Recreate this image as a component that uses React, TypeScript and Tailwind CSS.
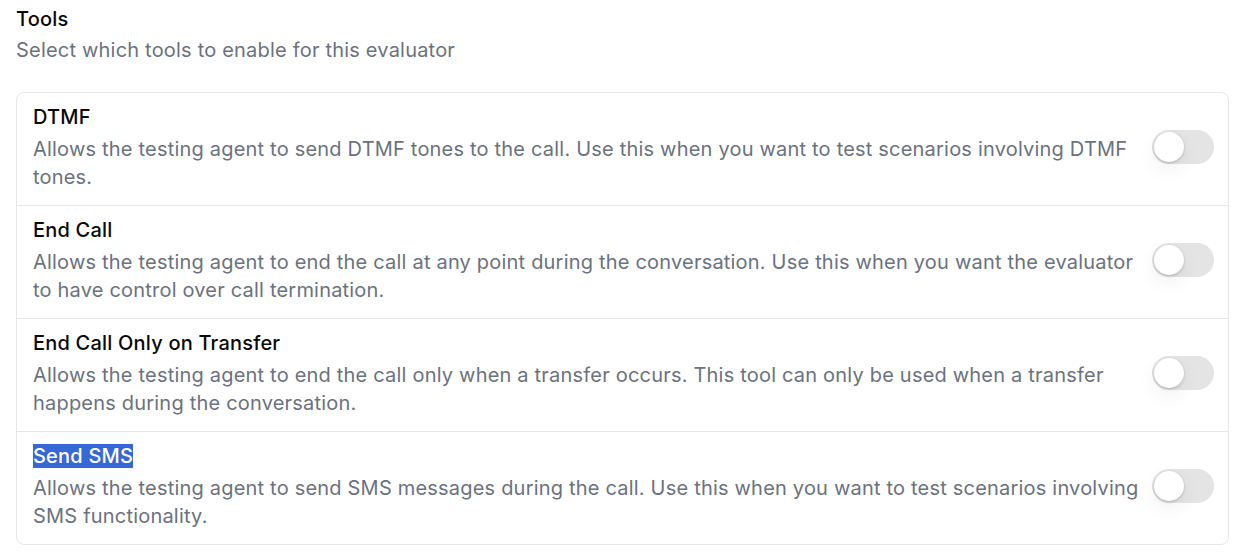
const tools = [
  {
    name: 'DTMF',
    description:
      'Allows the testing agent to send DTMF tones to the call. Use this when you want to test scenarios involving DTMF tones.',
  },
  {
    name: 'End Call',
    description:
      'Allows the testing agent to end the call at any point during the conversation. Use this when you want the evaluator to have control over call termination.',
  },
  {
    name: 'End Call Only on Transfer',
    description:
      'Allows the testing agent to end the call only when a transfer occurs. This tool can only be used when a transfer happens during the conversation.',
  },
  {
    name: 'Send SMS',
    description:
      'Allows the testing agent to send SMS messages during the call. Use this when you want to test scenarios involving SMS functionality.',
    selected: true,
  },
]

function Toggle() {
  return (
    <div className="flex h-[34px] w-[62px] shrink-0 items-center rounded-full bg-[#e4e4e4] px-[2px]">
      <div className="h-[30px] w-[30px] rounded-full bg-white shadow-[0_1px_3px_rgba(0,0,0,0.2),0_8px_20px_rgba(0,0,0,0.06)]" />
    </div>
  )
}

export default function App() {
  return (
    <div className="min-h-screen bg-white px-4 pt-[5px] font-['Inter',sans-serif] tracking-[0.2px]">
      <div className="text-[20px] leading-7 font-medium text-[#0a0a0a]">Tools</div>
      <div className="mt-[3px] text-[20px] leading-7 text-[#6b7280]">Select which tools to enable for this evaluator</div>

      <div className="mt-[28px] mr-[3px] rounded-lg border border-[#e5e7eb]">
        {tools.map((tool, i) => (
          <div
            key={tool.name}
            className={`flex items-center gap-3 pt-[10px] pb-[14px] pl-4 pr-[14px] ${i > 0 ? 'border-t border-[#e5e7eb]' : ''}`}
          >
            <div className="min-w-0 flex-1">
              <div className="text-[20px] leading-7 font-medium text-[#0a0a0a]">
                {tool.selected ? <span className="bg-[#3668d6] text-white">{tool.name}</span> : tool.name}
              </div>
              <p className="mt-1 text-[20px] leading-7 text-[#6b7280]">{tool.description}</p>
            </div>
            <Toggle />
          </div>
        ))}
      </div>
    </div>
  )
}
